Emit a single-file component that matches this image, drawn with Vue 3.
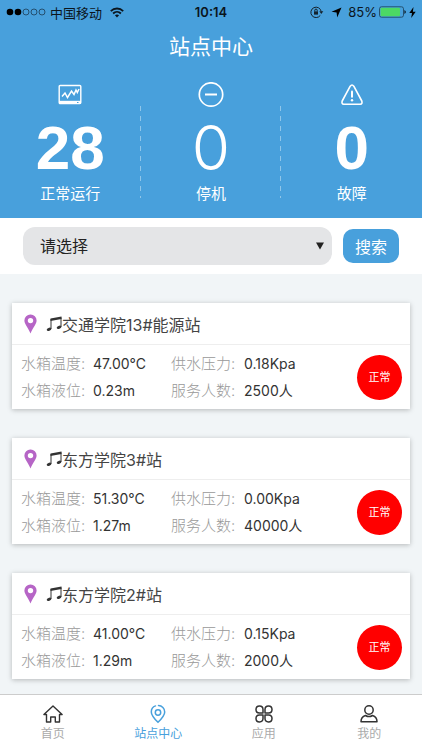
<script setup>
import { ref } from 'vue'

const picked = ref('')
const stations = [
  { name: '交通学院13#能源站', temp: '47.00°C', pressure: '0.18Kpa', level: '0.23m', people: '2500人' },
  { name: '东方学院3#站', temp: '51.30°C', pressure: '0.00Kpa', level: '1.27m', people: '40000人' },
  { name: '东方学院2#站', temp: '41.00°C', pressure: '0.15Kpa', level: '1.29m', people: '2000人' },
]
</script>

<template>
  <div class="page">
    <header class="top">
      <div class="status">
        <div class="side">
          <svg width="40" height="10" viewBox="0 0 40 10">
            <circle cx="4" cy="5" r="3.3" /><circle cx="12" cy="5" r="3.3" />
            <g fill="none" stroke="#1c3b54" stroke-width=".8">
              <circle cx="20" cy="5" r="3" /><circle cx="28" cy="5" r="3" /><circle cx="36" cy="5" r="3" />
            </g>
          </svg>
          <span class="carrier">中国移动</span>
          <svg width="14" height="11" viewBox="0 0 14 11" fill="none" stroke="#0b151d" stroke-width="1.8">
            <path d="M.8 4.1C4.3.6 9.700.6 13.2 4.1M3.1 6.500C5.3 4.3 8.7 4.3 10.9 6.500" />
            <path d="M7 10.600 4.900 8.300Q7 6.700 9.100 8.300Z" fill="#0b151d" stroke="none" />
          </svg>
        </div>
        <span class="clock">10:14</span>
        <div class="side end">
          <svg width="14" height="12" viewBox="0 0 14 12" fill="none" stroke="#14222d">
            <path d="M10.300 9.400A5.200 5.200 0 1 1 11.200 5.500" />
            <path d="M9.300 5.300H13.300L11.300 8Z" fill="#14222d" stroke="none" />
            <path d="M4 5.400H8V8.600H4Z" fill="#14222d" stroke="none" />
            <path d="M4.800 5.500V4.200Q4.800 3.100 6 3.100T7.200 4.200V5.500" />
          </svg>
          <svg class="arrow" width="11" height="11" viewBox="0 0 11 11"><path d="M10.500.5 6.200 10.500 5.600 5.400.5 4.800Z" /></svg>
          <span class="percent">85%</span>
          <svg width="28" height="12" viewBox="0 0 28 12">
            <rect x=".5" y=".8" width="24" height="10.400" rx="2" fill="none" stroke="#24506f" />
            <rect x="1.500" y="1.800" width="19.500" height="8.400" rx="1" fill="#4cd964" />
            <path d="M25.500 4Q28 6 25.500 8Z" />
          </svg>
          <svg width="7" height="11" viewBox="0 0 7 11"><path d="M4.500 0 .3 6H3L2.200 11 6.700 4.700H3.900Z" /></svg>
        </div>
      </div>
      <h1>站点中心</h1>
      <div class="stats">
        <div class="stat">
          <svg width="24" height="26" viewBox="0 0 24 26" fill="none" stroke="#fff">
            <rect x="1.200" y="3.500" width="21.600" height="18" rx="1" stroke-width="1.400" />
            <path d="M1 20.300H23" stroke-width="3" />
            <path d="M4 14.500 7 11 9.500 15.500 13.500 9 16 12.500 18 8 19.300 10.500 21 7" stroke-width="1.500" />
            <path d="M19 20.500H20.500" stroke="#48a0dc" stroke-width="1" />
          </svg>
          <strong>28</strong>
          <span>正常运行</span>
        </div>
        <div class="stat">
          <svg width="26" height="26" viewBox="0 0 26 26" fill="none" stroke="#fff">
            <circle cx="13" cy="12.500" r="11.700" stroke-width="1.700" /><path d="M7 12.500H19" stroke-width="2" />
          </svg>
          <strong class="thin">0</strong>
          <span>停机</span>
        </div>
        <div class="stat">
          <svg width="24" height="26" viewBox="0 0 24 26" fill="none" stroke="#fff" stroke-linejoin="round" stroke-linecap="round">
            <path d="M10.200 4.200Q12 1.800 13.800 4.200L21.800 19Q22.700 22 20.200 22.200H3.800Q1.300 22 2.200 19Z" stroke-width="1.600" />
            <path d="M12 9.500V14.800" stroke-width="2" /><path d="M12 18.200V18.300" stroke-width="2.400" />
          </svg>
          <strong>0</strong>
          <span>故障</span>
        </div>
      </div>
    </header>

    <form class="search" @submit.prevent>
      <div class="picker">
        <select v-model="picked" aria-label="请选择">
          <option value="">请选择</option>
          <option v-for="s in stations" :key="s.name" :value="s.name">{{ s.name }}</option>
        </select>
        <svg class="caret" width="8" height="8" viewBox="0 0 8 8"><path d="M0 .5H8L4 7.500Z" fill="#222" /></svg>
      </div>
      <button type="submit">搜索</button>
    </form>

    <main class="list">
      <article v-for="s in stations" :key="s.name" class="card">
        <h2>
          <svg width="13" height="20" viewBox="0 0 13 20">
            <path fill="#b665c6" fill-rule="evenodd" d="M6.500.5A6 6 0 0 0 .4 6.600C.4 10 3.500 13 6.500 19.500 9.500 13 12.600 10 12.600 6.600A6 6 0 0 0 6.500.5ZM6.500 3.900A2.700 2.700 0 1 1 6.500 9.300 2.700 2.700 0 0 1 6.500 3.900Z" />
          </svg>
          <svg class="note" role="img" aria-label="♫" width="16" height="16" viewBox="0 0 16 16" fill="#333">
            <path d="M4.500 2.600 15.500.5V3L4.500 5.100Z" />
            <path d="M5 3V13M15 1.500V11" fill="none" stroke="#333" />
            <ellipse cx="3" cy="13.300" rx="2.400" ry="1.500" transform="rotate(-20 3 13.300)" />
            <ellipse cx="13" cy="11.300" rx="2.400" ry="1.500" transform="rotate(-20 13 11.300)" />
          </svg>
          <span>{{ s.name }}</span>
        </h2>
        <div class="body">
          <dl>
            <dt>水箱温度:</dt><dd>{{ s.temp }}</dd>
            <dt>供水压力:</dt><dd>{{ s.pressure }}</dd>
            <dt>水箱液位:</dt><dd>{{ s.level }}</dd>
            <dt>服务人数:</dt><dd>{{ s.people }}</dd>
          </dl>
          <span class="state">正常</span>
        </div>
      </article>
    </main>

    <nav class="tabs">
      <a href="#home">
        <svg width="20" height="20" viewBox="0 0 20 20" fill="none" stroke="#333" stroke-width="1.400" stroke-linejoin="round" stroke-linecap="round">
          <path d="M3.500 10.500H.9L10 2 19.100 10.500H16.500V18H12.300V13H7.700V18H3.500Z" />
        </svg>
        <span>首页</span>
      </a>
      <a href="#stations" class="active">
        <svg width="20" height="20" viewBox="0 0 20 20" fill="none" stroke="#48a0dc" stroke-width="1.500">
          <path d="M7.500 1.900C5 2.700 3.300 5 3.300 7.900 3.300 11 5.700 14 10 18.300 14.300 14 16.700 11 16.700 7.900 16.700 4.500 14 1.600 10.500 1.600" stroke-linecap="round" />
          <circle cx="10" cy="8.500" r="2.700" />
        </svg>
        <span>站点中心</span>
      </a>
      <a href="#apps">
        <svg width="20" height="20" viewBox="0 0 20 20" fill="none" stroke="#333" stroke-width="1.500" stroke-linejoin="round">
          <path d="M9 9H5.400A3.500 3.500 0 1 1 9 5.400ZM11 9V5.400A3.500 3.500 0 1 1 14.600 9ZM9 11V14.600A3.500 3.500 0 1 1 5.400 11ZM11 11H14.600A3.500 3.500 0 1 1 11 14.600Z" />
        </svg>
        <span>应用</span>
      </a>
      <a href="#me">
        <svg width="20" height="20" viewBox="0 0 20 20" fill="none" stroke="#333" stroke-width="1.500" stroke-linejoin="round">
          <circle cx="10" cy="6" r="4.200" />
          <path d="M6.500 11.500C3.500 12.500 2 14.500 2 17.700H18C18 14.500 16.500 12.500 13.500 11.500Q10 13.700 6.500 11.500Z" />
        </svg>
        <span>我的</span>
      </a>
    </nav>
  </div>
</template>

<style>
body {
  margin: 0;
  background: #f1f5f7;
}
</style>

<style scoped>
.page {
  display: flex;
  flex-direction: column;
  min-height: 100vh;
  font-family: Inter, "Noto Sans CJK SC", sans-serif;
  color: #333;
}
svg {
  display: block;
  flex: none;
}
.top {
  background: #48a0dc;
  color: #fff;
  padding-bottom: 12px;
}
.status {
  display: flex;
  align-items: center;
  height: 24px;
  padding: 0 6px;
  font-size: 13px;
  color: #0b151d;
}
.side {
  flex: 1;
  display: flex;
  align-items: center;
  gap: 4px;
}
.end {
  justify-content: flex-end;
  gap: 2px;
}
.carrier {
  margin-right: 4px;
}
.clock {
  font-weight: 600;
}
.arrow {
  margin: 0 4px 0 5px;
}
h1 {
  margin: 0;
  font-size: 21px;
  line-height: 46px;
  font-weight: 400;
  text-align: center;
}
.stats {
  display: flex;
  padding-top: 12px;
}
.stat {
  flex: 1;
  display: flex;
  flex-direction: column;
  align-items: center;
  position: relative;
  font-size: 15px;
  line-height: 24px;
}
.stat + .stat::before {
  content: "";
  position: absolute;
  left: -1px;
  top: 24px;
  bottom: 8px;
  width: 1px;
  background: repeating-linear-gradient(#8fc6ea 0 5px, transparent 5px 10px);
}
strong {
  margin-top: 6px;
  font: 700 62px/68px "Liberation Sans", Arial, sans-serif;
}
strong.thin {
  font-family: Inter, sans-serif;
  font-weight: 300;
}
.search {
  display: flex;
  align-items: center;
  gap: 11px;
  padding: 9px 23px;
  background: #fff;
}
.picker {
  flex: 1;
  display: grid;
  align-items: center;
}
.picker > * {
  grid-area: 1 / 1;
}
select {
  appearance: none;
  width: 100%;
  height: 38px;
  padding: 0 17px;
  border: 0;
  border-radius: 12px;
  background: #e4e5e7;
  color: #222;
  font: inherit;
  font-size: 16px;
}
.caret {
  justify-self: end;
  margin-right: 8px;
  pointer-events: none;
}
button {
  height: 34px;
  padding: 0 12px;
  border: 0;
  border-radius: 10px;
  background: #48a0dc;
  color: #fff;
  font: inherit;
  font-size: 16px;
}
.list {
  flex: 1;
  display: flex;
  flex-direction: column;
  gap: 29px;
  padding: 29px 12px 14px;
}
.card {
  background: #fff;
  box-shadow: 0 1px 5px rgba(0, 0, 0, 0.25);
}
h2 {
  display: flex;
  align-items: center;
  height: 41px;
  margin: 0;
  padding-left: 12px;
  border-bottom: 1px solid #eee;
  font-size: 16px;
  font-weight: 400;
  color: #444;
}
.note {
  margin-left: 9px;
}
.body {
  display: flex;
  align-items: center;
  justify-content: space-between;
  padding: 5px 8px 5px 9px;
}
dl {
  display: grid;
  grid-template-columns: 72px 78px 73px auto;
  margin: 0;
  font-size: 15px;
  line-height: 27px;
  white-space: nowrap;
}
dt {
  color: #999;
  font-weight: 300;
}
dd {
  margin: 0;
  font-size: 14px;
}
.state {
  width: 45px;
  height: 45px;
  border-radius: 50%;
  background: #f00;
  color: #fff;
  font-size: 11px;
  line-height: 45px;
  text-align: center;
}
.tabs {
  display: flex;
  padding: 9px 0 6px;
  border-top: 1px solid #ccc;
  background: #fff;
}
.tabs a {
  flex: 1;
  display: flex;
  flex-direction: column;
  align-items: center;
  color: #aaa;
  font-size: 12px;
  line-height: 20px;
  text-decoration: none;
}
.tabs .active {
  color: #48a0dc;
}
</style>
